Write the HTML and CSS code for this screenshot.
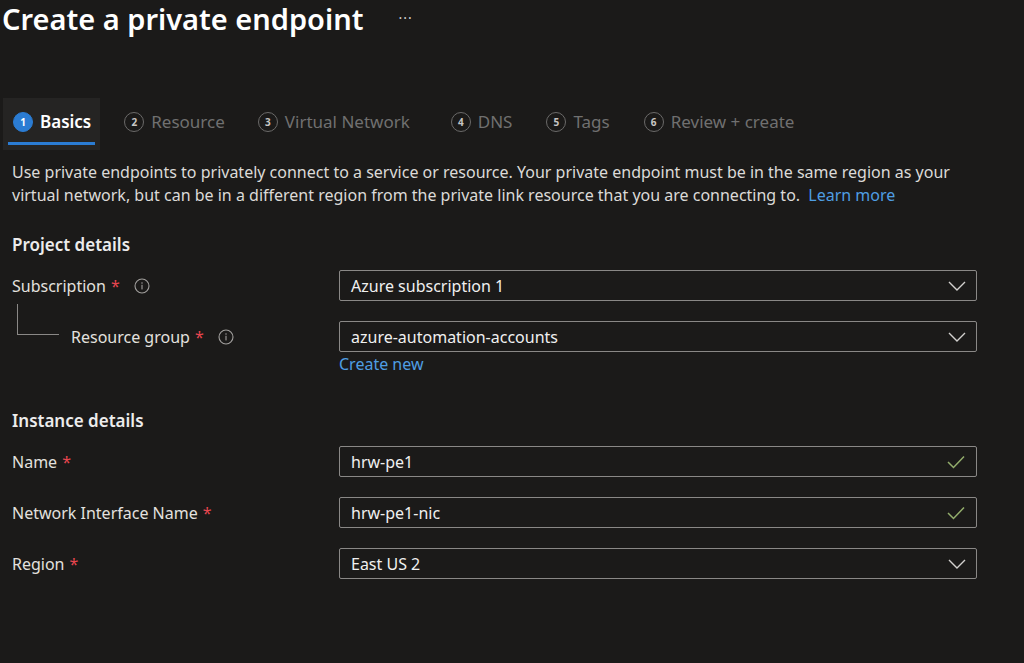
FILE: index.html
```html
<!DOCTYPE html>
<html lang="en">
<head>
<meta charset="utf-8">
<title>Create a private endpoint</title>
<link rel="stylesheet" href="styles.css">
</head>
<body>
<div class="page">
  <header class="title-bar">
    <h1 class="title">Create a private endpoint</h1>
    <span class="more">···</span>
  </header>

  <nav class="tabs">
    <div class="tab active"><span class="num">1</span><span class="tab-label">Basics</span></div>
    <div class="tab"><span class="num">2</span><span class="tab-label">Resource</span></div>
    <div class="tab"><span class="num">3</span><span class="tab-label">Virtual Network</span></div>
    <div class="tab tab-dns"><span class="num">4</span><span class="tab-label">DNS</span></div>
    <div class="tab tab-late"><span class="num">5</span><span class="tab-label">Tags</span></div>
    <div class="tab tab-late"><span class="num">6</span><span class="tab-label">Review + create</span></div>
  </nav>

  <p class="desc">Use private endpoints to privately connect to a service or resource. Your private endpoint must be in the same region as your virtual network, but can be in a different region from the private link resource that you are connecting to. <a class="link learn" href="#">Learn more</a></p>

  <h2 class="section">Project details</h2>

  <div class="row">
    <div class="label">Subscription<span class="req">*</span>
      <svg class="info" viewBox="0 0 16 16" width="16" height="16"><circle cx="8" cy="8" r="7" fill="none" stroke="#a19f9d" stroke-width="1.1"/><rect x="7.45" y="6.8" width="1.1" height="4.6" fill="#a19f9d"/><circle cx="8" cy="5" r="0.75" fill="#a19f9d"/></svg>
    </div>
    <div class="field">
      <span class="value">Azure subscription 1</span>
      <svg class="chev" viewBox="0 0 18 10" width="18" height="10"><path d="M1 1 L9 9 L17 1" fill="none" stroke="#d2d0ce" stroke-width="1.4"/></svg>
    </div>
  </div>

  <div class="row row-rg">
    <div class="label label-nested"><span class="tree"></span>Resource group<span class="req">*</span>
      <svg class="info" viewBox="0 0 16 16" width="16" height="16"><circle cx="8" cy="8" r="7" fill="none" stroke="#a19f9d" stroke-width="1.1"/><rect x="7.45" y="6.8" width="1.1" height="4.6" fill="#a19f9d"/><circle cx="8" cy="5" r="0.75" fill="#a19f9d"/></svg>
    </div>
    <div class="field-wrap">
      <div class="field">
        <span class="value">azure-automation-accounts</span>
        <svg class="chev" viewBox="0 0 18 10" width="18" height="10"><path d="M1 1 L9 9 L17 1" fill="none" stroke="#d2d0ce" stroke-width="1.4"/></svg>
      </div>
      <a class="link create" href="#">Create new</a>
    </div>
  </div>

  <h2 class="section section-instance">Instance details</h2>

  <div class="row">
    <div class="label">Name<span class="req">*</span></div>
    <div class="field">
      <span class="value">hrw-pe1</span>
      <svg class="check" viewBox="0 0 18 14" width="18" height="14"><path d="M1 7 L6.5 12.5 L17 1.5" fill="none" stroke="#93ad6c" stroke-width="1.5"/></svg>
    </div>
  </div>

  <div class="row">
    <div class="label">Network Interface Name<span class="req">*</span></div>
    <div class="field">
      <span class="value">hrw-pe1-nic</span>
      <svg class="check" viewBox="0 0 18 14" width="18" height="14"><path d="M1 7 L6.5 12.5 L17 1.5" fill="none" stroke="#93ad6c" stroke-width="1.5"/></svg>
    </div>
  </div>

  <div class="row">
    <div class="label">Region<span class="req">*</span></div>
    <div class="field">
      <span class="value">East US 2</span>
      <svg class="chev" viewBox="0 0 18 10" width="18" height="10"><path d="M1 1 L9 9 L17 1" fill="none" stroke="#d2d0ce" stroke-width="1.4"/></svg>
    </div>
  </div>
</div>
</body>
</html>
```

FILE: styles.css
```css
html, body {
  margin: 0;
  padding: 0;
  background: #1b1a19;
}
body {
  width: 1024px;
  height: 663px;
  overflow: hidden;
  font-family: "Noto Sans", "Open Sans", sans-serif;
  color: #e8e6e3;
}
.page {
  padding: 0 0 0 12px;
}
.title-bar {
  display: flex;
  align-items: center;
  margin-left: -10px;
  height: 38px;
}
.title {
  margin: 0;
  font-size: 29px;
  font-weight: 600;
  color: #ffffff;
  line-height: 38px;
}
.more {
  margin-left: 35px;
  font-size: 14px;
  letter-spacing: 1px;
  color: #d0d0d0;
  line-height: 14px;
  margin-top: -2px;
}
.tabs {
  display: flex;
  gap: 14px;
  margin-top: 60px;
  margin-left: -9px;
  height: 52px;
}
.tab {
  display: flex;
  align-items: center;
  gap: 7px;
  padding: 0 9px 5px 10px;
  height: 52px;
  box-sizing: border-box;
  color: #707070;
  font-size: 17px;
  position: relative;
}
.tab.tab-dns {
  margin-left: 8px;
}
.tab.tab-late {
  margin-left: 1px;
}
.tab.active {
  background: #252423;
  color: #ffffff;
  font-weight: 600;
}
.tab.active::after {
  content: "";
  position: absolute;
  left: 5px;
  right: 5px;
  bottom: 5px;
  height: 3px;
  background: #2b7cd3;
}
.num {
  width: 20px;
  height: 20px;
  box-sizing: border-box;
  border-radius: 50%;
  border: 1.5px solid #6b6a69;
  display: flex;
  align-items: center;
  justify-content: center;
  font-size: 10px;
  font-weight: 700;
  color: #c8c6c4;
  flex: none;
}
.tab.active .num {
  background: #2b7cd3;
  border-color: #2b7cd3;
  color: #ffffff;
}
.desc {
  margin: 11px 0 0 0;
  width: 958px;
  font-size: 16px;
  line-height: 23px;
  color: #dcdad8;
}
.link {
  color: #4f9ee3;
  text-decoration: none;
}
.learn {
  margin-left: 4px;
}
.section {
  margin: 26px 0 0 0;
  font-size: 17px;
  font-weight: 600;
  line-height: 24px;
  color: #ececec;
}
.section-instance {
  margin-top: 34px;
}
.row {
  display: grid;
  grid-template-columns: 327px 638px;
  align-items: start;
  margin-top: 20px;
}
.section + .row {
  margin-top: 13px;
}
.label {
  display: flex;
  align-items: center;
  height: 31px;
  font-size: 16px;
  color: #e3e1df;
}
.label-nested {
  padding-left: 5px;
}
.tree {
  align-self: flex-start;
  width: 41px;
  height: 30px;
  margin-top: -17px;
  margin-right: 12px;
  border-left: 1px solid #8a8886;
  border-bottom: 1px solid #8a8886;
  flex: none;
}
.req {
  color: #e8464f;
  margin-left: 5px;
  font-size: 16px;
}
.info {
  margin-left: 14px;
}
.field {
  display: flex;
  align-items: center;
  justify-content: space-between;
  height: 31px;
  box-sizing: border-box;
  border: 1px solid #8a8886;
  border-radius: 2px;
  padding: 0 10px 0 11px;
}
.value {
  font-size: 16px;
  color: #f0f0f0;
}
.chev {
  flex: none;
}
.check {
  flex: none;
  margin-right: 1px;
}
.create {
  display: block;
  font-size: 16px;
  line-height: 22px;
  margin-top: 1px;
}
```
